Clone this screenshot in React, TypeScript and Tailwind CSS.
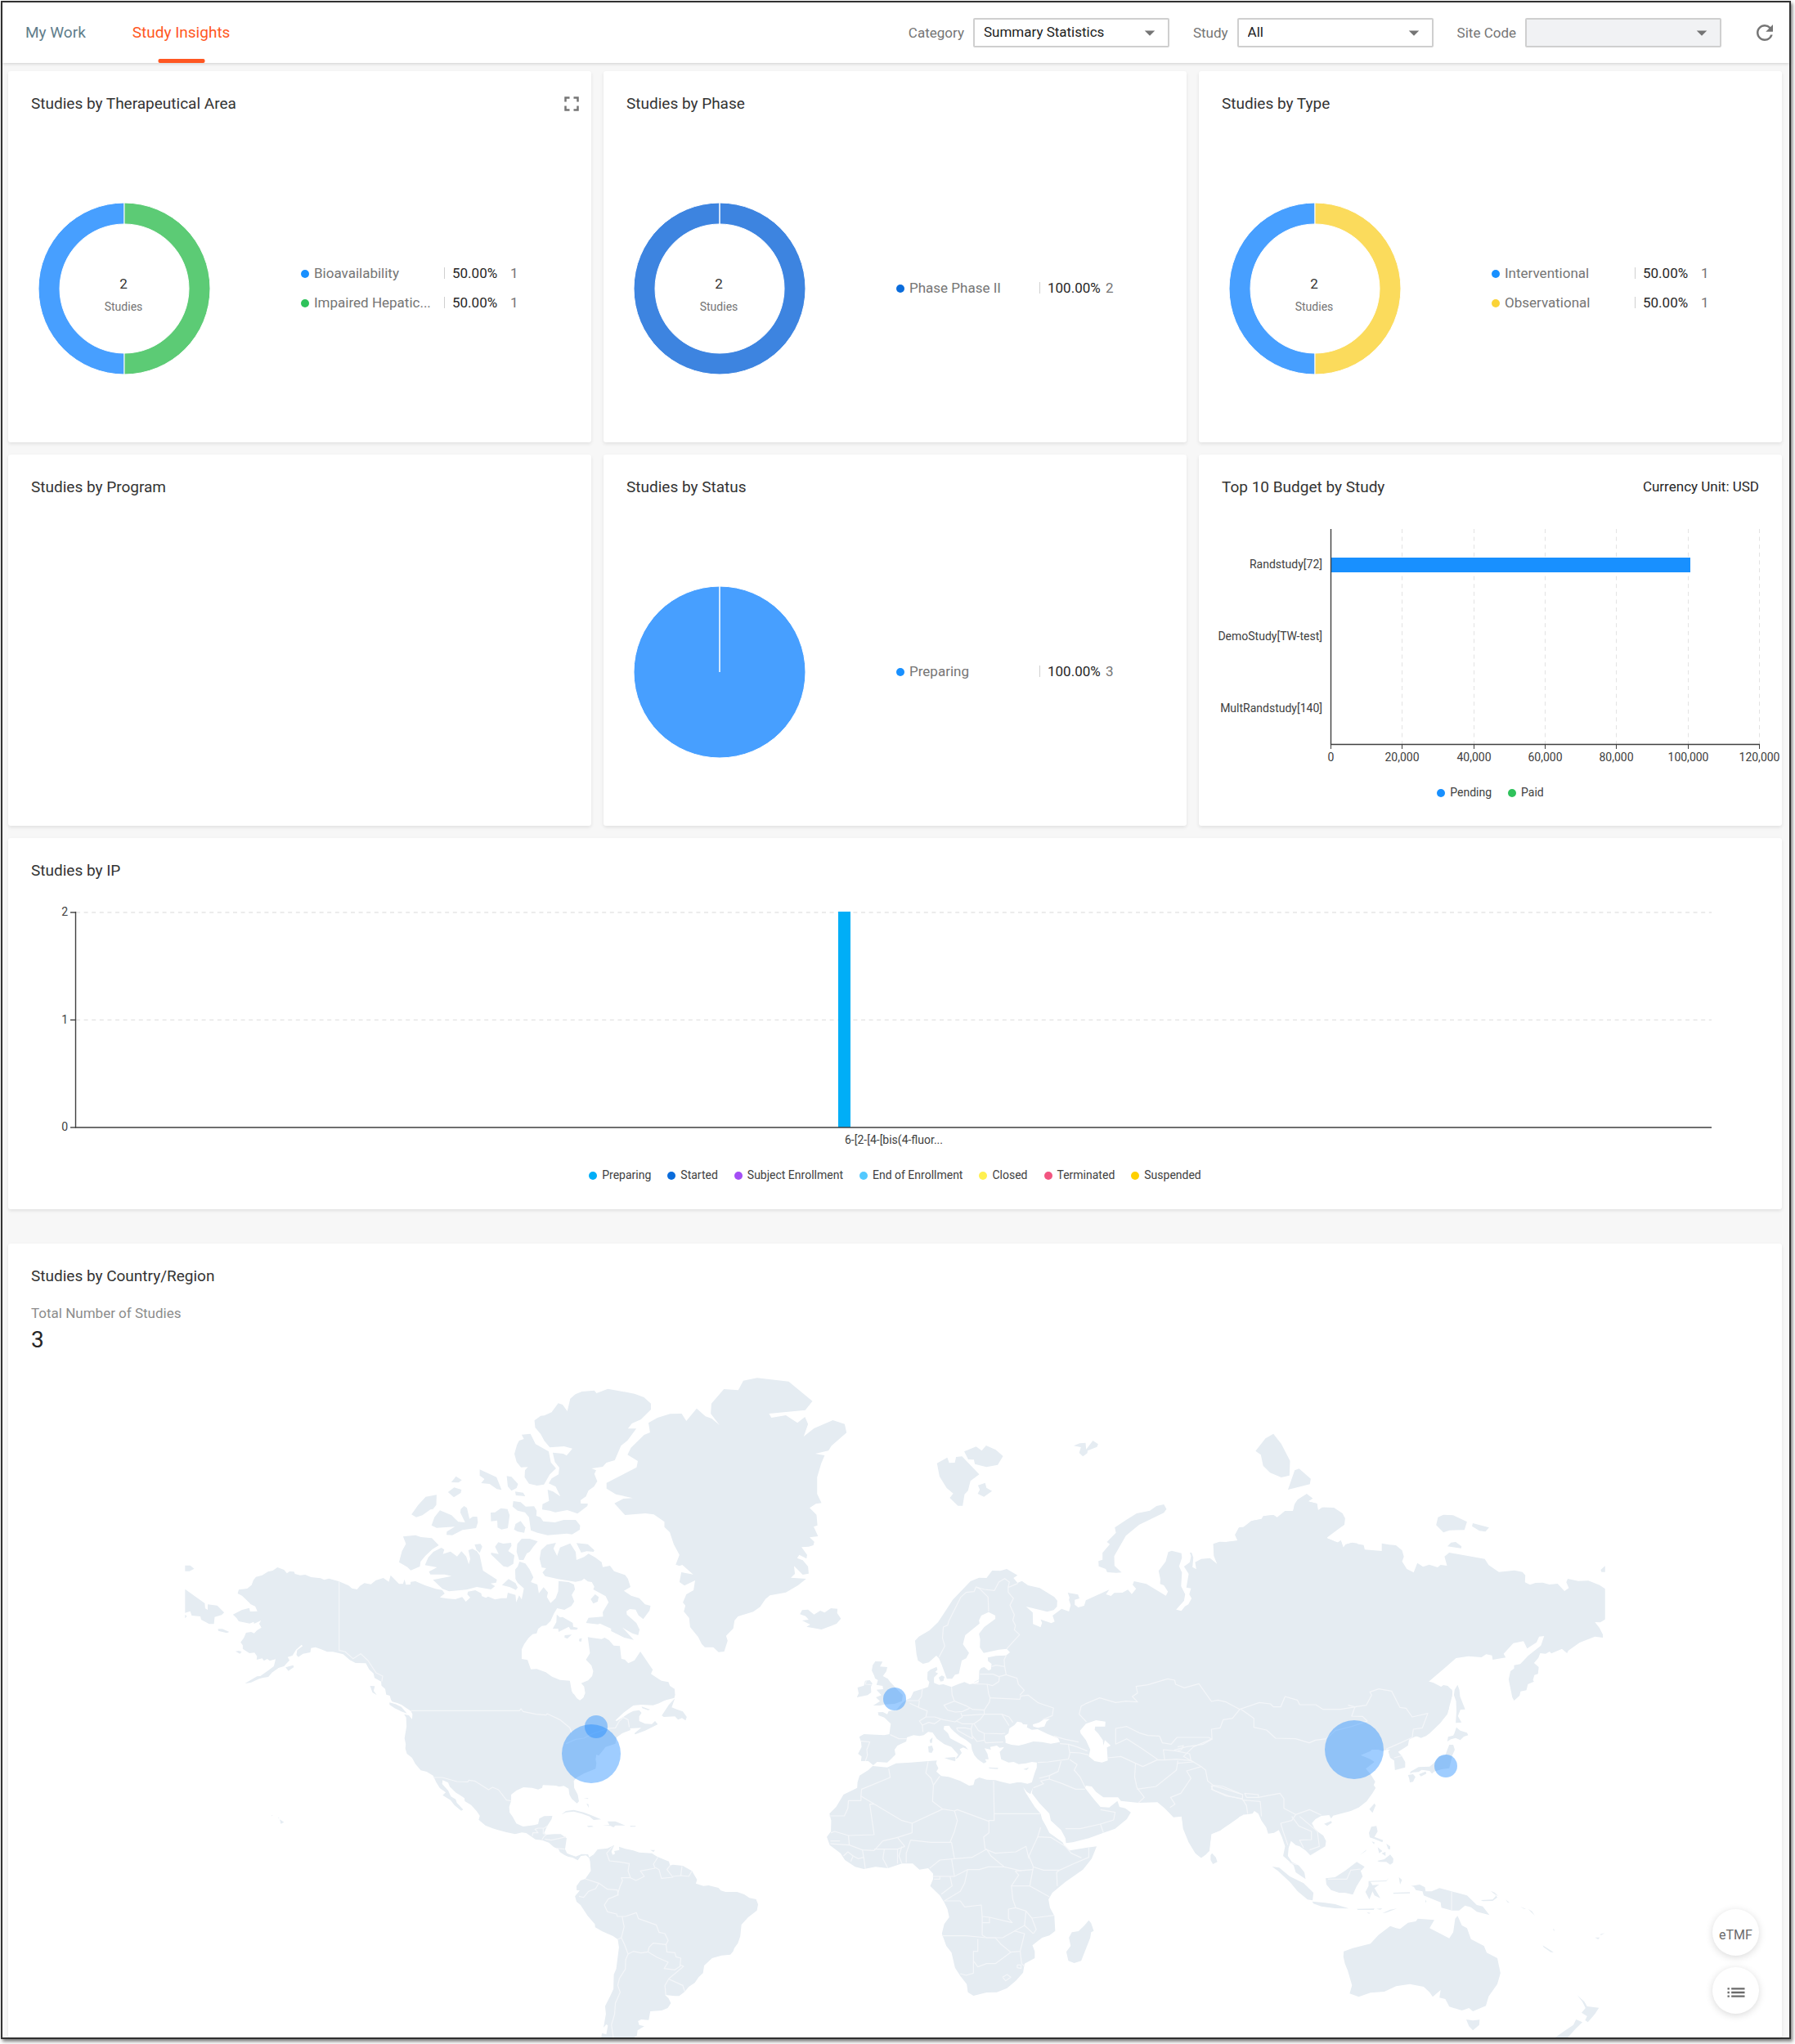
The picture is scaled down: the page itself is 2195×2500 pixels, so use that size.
import React from "react";
import { MdArrowDropDown, MdFullscreen, MdList, MdRefresh } from "react-icons/md";

const FONT = "font-['Roboto','Liberation_Sans',sans-serif]";

/* ------------------------------- header -------------------------------- */

function FilterSelect({ id, label, options, disabled }: { id: string; label: string; options: string[]; disabled?: boolean }) {
  return (
    <div className="flex items-center gap-[11px]">
      <label htmlFor={id} className="text-[17px] leading-6 text-[#757575]">
        {label}
      </label>
      <div className="relative">
        <select
          id={id}
          disabled={disabled}
          className="block h-9 w-[240px] appearance-none rounded-[2px] border-2 border-[#cfcfcf] bg-white pl-[11px] pr-9 text-[17px] text-[#212121] opacity-100 disabled:bg-[#f1f2f4]"
        >
          {options.map((o) => (
            <option key={o}>{o}</option>
          ))}
        </select>
        <MdArrowDropDown className="pointer-events-none absolute right-[9px] top-[3px] text-[#757575]" size={30} />
      </div>
    </div>
  );
}

function Header() {
  return (
    <header className="relative flex h-[74px] items-center justify-between bg-white pl-7 pr-[15px] shadow-[0_1px_4px_rgba(0,0,0,0.16)]">
      <nav className="flex h-full gap-[57px]">
        <button type="button" className="text-[19px] text-[#607d8b]">
          My Work
        </button>
        <button type="button" className="relative text-[19px] text-[#ff5722]">
          Study Insights
          <span className="absolute bottom-0 left-1/2 h-[5px] w-[57px] -translate-x-1/2 rounded-[2px] bg-[#ff5722]" />
        </button>
      </nav>
      <div className="flex items-center gap-[29px]">
        <FilterSelect id="category" label="Category" options={["Summary Statistics"]} />
        <FilterSelect id="study" label="Study" options={["All"]} />
        <FilterSelect id="site" label="Site Code" options={[""]} disabled />
        <button type="button" aria-label="Refresh" className="ml-[9px] text-[#757575]">
          <MdRefresh size={30} />
        </button>
      </div>
    </header>
  );
}

/* -------------------------------- cards -------------------------------- */

function Card({ title, extra, className = "", children }: { title: string; extra?: React.ReactNode; className?: string; children?: React.ReactNode }) {
  return (
    <section className={"min-h-[454px] min-w-0 rounded-[3px] bg-white pt-[26px] shadow-[0_2px_4px_rgba(0,0,0,0.09)] " + className}>
      <div className="flex h-7 items-center justify-between pl-7">
        <h2 className="text-[19px] leading-7 text-[#333]">{title}</h2>
        {extra}
      </div>
      {children}
    </section>
  );
}

type Slice = { name: string; pct: string; count: number; fill: string; dot: string };

function arc(from: number, to: number, r: number, hole: number) {
  const c = 105;
  const p = (a: number, k: number) => `${c + k * Math.sin(a * 2 * Math.PI)} ${c - k * Math.cos(a * 2 * Math.PI)}`;
  const mid = (from + to) / 2;
  return `M${p(from, r)}A${r} ${r} 0 0 1 ${p(mid, r)}A${r} ${r} 0 0 1 ${p(to, r)}L${p(to, hole)}A${hole} ${hole} 0 0 0 ${p(mid, hole)}A${hole} ${hole} 0 0 0 ${p(from, hole)}Z`;
}

function PieCard({ title, slices, total, extra }: { title: string; slices: Slice[]; total?: number; extra?: React.ReactNode }) {
  const hole = total === undefined ? 0 : 79;
  const n = slices.length;
  return (
    <Card title={title} extra={extra}>
      <div className="flex items-center gap-[111px] pl-[37px] pt-[107px]">
        <div className="relative shrink-0">
          <svg width="210" height="210" viewBox="0 0 210 210" className="overflow-visible">
            {slices.map((s, i) => (
              <path key={s.name} d={arc((n - 1 - i) / n, (n - i) / n, 105, hole)} fill={s.fill} stroke="#fff" strokeWidth="1" />
            ))}
          </svg>
          {total !== undefined && (
            <div className="absolute inset-0 flex flex-col items-center justify-center pl-px pr-[3px] pt-4">
              <span className="text-[17px] leading-7 text-[#333]">{total}</span>
              <span className="text-[14px] leading-7 text-[#757575]">Studies</span>
            </div>
          )}
        </div>
        <ul className="flex flex-col pb-[2px] text-[17px] leading-9 text-[#757575]">
          {slices.map((s) => (
            <li key={s.name} className="flex items-center">
              <span className={"mr-[6px] mt-[2px] h-[10px] w-[10px] rounded-full " + s.dot} />
              <span className="w-[159px]">{s.name}</span>
              <span className="mr-[9px] h-[14px] w-px bg-[#d0d0d0]" />
              <span className="w-[71px] text-[#262626]">{s.pct}</span>
              <span>{s.count}</span>
            </li>
          ))}
        </ul>
      </div>
    </Card>
  );
}

function Legend({ items }: { items: [string, string][] }) {
  return (
    <ul className="flex justify-center gap-5 text-[14px] leading-5 text-[#404040]">
      {items.map(([name, dot]) => (
        <li key={name} className="flex items-center gap-[6px]">
          <span className={"mt-[2px] h-[10px] w-[10px] rounded-full " + dot} />
          {name}
        </li>
      ))}
    </ul>
  );
}

function BudgetCard() {
  const ticks = ["0", "20,000", "40,000", "60,000", "80,000", "100,000", "120,000"];
  const rows = ["Randstudy[72]", "DemoStudy[TW-test]", "MultRandstudy[140]"];
  return (
    <Card title="Top 10 Budget by Study" extra={<span className="pr-7 text-[17px] text-[#262626]">Currency Unit: USD</span>}>
      <svg viewBox="0 0 713 300" className="mt-[30px] block w-full text-[14px]" fill="#404040">
        {ticks.map((t, i) => {
          const x = Math.round(161 + i * 87.3) + 0.5;
          return (
            <g key={t}>
              {i > 0 && <path d={`M${x} 7V270`} stroke="#e3e3e3" strokeDasharray="5 4.6" />}
              <path d={`M${x} 270v6`} stroke="#404040" />
              <text x={x} y="291" textAnchor="middle">
                {t}
              </text>
            </g>
          );
        })}
        {rows.map((r, i) => (
          <text key={r} x="151" y={55 + i * 88} textAnchor="end">
            {r}
          </text>
        ))}
        <rect x="162" y="42" width="439" height="18" fill="#1890ff" />
        <path d="M161.5 7V270.5H686" fill="none" stroke="#404040" strokeWidth="1.4" />
      </svg>
      <div className="pt-[19px]">
        <Legend items={[["Pending", "bg-[#1890ff]"], ["Paid", "bg-[#2fc25b]"]]} />
      </div>
    </Card>
  );
}

function IpCard() {
  return (
    <Card title="Studies by IP">
      <svg viewBox="0 0 2169 310" className="mt-[21px] block w-full text-[14px]" fill="#404040">
        {[2, 1, 0].map((v, i) => {
          const y = [16, 147.5, 279][i];
          return (
            <g key={v}>
              {v > 0 && <path d={`M83 ${y}H2083`} stroke="#e6e6e6" strokeWidth="1.4" strokeDasharray="5 4.6" />}
              <path d={`M76 ${y}h7`} stroke="#404040" strokeWidth="1.4" />
              <text x="73" y={y + 4} textAnchor="end">
                {v}
              </text>
            </g>
          );
        })}
        <rect x="1015" y="15" width="15" height="264" fill="#00aef7" />
        <path d="M82.5 15V279H2083" fill="none" stroke="#404040" strokeWidth="1.4" />
        <text x="1083" y="299" textAnchor="middle">
          6-[2-[4-[bis(4-fluor...
        </text>
      </svg>
      <div className="pt-[17px]">
        <Legend
          items={[
            ["Preparing", "bg-[#00aef7]"],
            ["Started", "bg-[#0a6cdb]"],
            ["Subject Enrollment", "bg-[#a44ef5]"],
            ["End of Enrollment", "bg-[#53c9ff]"],
            ["Closed", "bg-[#fff04f]"],
            ["Terminated", "bg-[#f25580]"],
            ["Suspended", "bg-[#ffd000]"],
          ]}
        />
      </div>
    </Card>
  );
}

/* --------------------------------- map --------------------------------- */

type Tile = { transform: string; land: string[]; water?: string[]; borders: string[] };

/* Each tile keeps its outlines in a local grid that the transform places on the map. */
const TILES: Tile[] = [
  {
    // Alaska, Canada and the Arctic islands
    transform: "translate(200 1660) scale(0.44643 0.33333)",
    land: [
      "481,823 453,812 440,817 430,811 404,807 388,798 374,800 360,795 357,787 345,786 338,793 330,780 312,771 299,783 286,787 270,800 253,806 246,818 241,836 229,849 206,853 203,867 215,875 229,893 239,907 251,914 257,932 237,933 235,920 215,927 190,944 200,957 206,969 236,977 247,971 248,978 267,966 262,978 268,992 256,1002 248,1013 240,1008 226,1011 220,1030 211,1046 217,1057 217,1070 235,1086 249,1084 256,1097 255,1110 270,1105 275,1114 284,1107 291,1114 307,1108 302,1134 288,1148 265,1170 256,1171 223,1197 239,1194 262,1180 273,1176 287,1173 297,1157 315,1140 330,1134 336,1125 345,1112 340,1100 353,1095 363,1073 378,1055 381,1060 366,1075 364,1092 369,1100 382,1088 402,1083 404,1067 416,1064 432,1072 448,1081 464,1081 492,1090 510,1111 526,1122 554,1123 563,1145 575,1160 578,1177 596,1190 597,1205 607,1217 610,1238 622,1243 626,1260 1140,1260 1127,1248 1118,1225 1113,1187 1086,1184 1064,1172 1047,1156 1022,1144 1006,1145 997,1111 981,1107 981,1072 988,1052 1000,1030 1011,1016 1022,1013 1026,997 1036,986 1048,984 1060,968 1069,941 1078,921 1098,927 1117,913 1125,896 1118,872 1127,852 1124,834 1110,825 1082,821 1081,859 1074,884 1060,902 1050,880 1053,863 1041,844 1028,866 1024,834 1006,825 1013,808 1002,777 991,757 975,750 970,768 963,779 964,814 970,828 987,848 981,889 974,874 966,899 964,872 943,864 940,884 926,884 908,889 889,878 883,883 872,877 870,866 854,855 834,860 832,870 840,882 828,897 818,880 799,888 778,886 757,881 770,867 763,854 745,850 716,837 690,822 677,824 676,834 664,835 660,815 656,832 645,832 622,800 617,824 602,810 581,819 568,833 550,829 538,839 530,852 516,848 507,838",
      "1140,1260 1150,1250 1155,1233 1152,1208 1144,1196 1163,1186 1174,1170 1177,1152 1172,1131 1157,1110 1168,1086 1162,1027 1175,1030 1200,1034 1208,1029 1220,1038 1233,1058 1250,1060 1254,1106 1264,1110 1273,1123 1290,1112 1306,1080 1340,1147 1335,1162 1355,1180 1364,1187 1383,1192 1387,1206 1400,1217 1401,1240 1399,1250 1370,1260",
      "1058,331 1043,307 1033,282 1018,258 1016,232 1033,215 1043,214 1063,202 1081,169 1093,174 1106,198 1114,152 1128,136 1146,126 1180,122 1186,132 1217,116 1290,134 1316,147 1335,170 1335,192 1308,228 1283,243 1272,262 1295,262 1271,305 1253,325 1236,378 1213,387 1203,402 1172,408 1185,415 1180,428 1188,455 1179,475 1164,489 1157,511 1142,525 1143,537 1162,537 1161,546 1134,574 1106,561 1073,569 1058,563 1037,559 1038,539 1056,527 1052,486 1067,493 1087,511 1074,475 1055,463 1063,445 1082,430 1084,405 1072,385 1066,350 1095,354 1104,361 1120,335 1097,327",
      "981,284 1005,281 1019,319 1055,346 1061,386 1075,408 1058,430 1042,467 1023,471 1001,464 989,440 990,415 998,403 979,404 967,384 961,355 968,322 974,306 987,300",
      "866,412 912,440 926,487 913,484 893,465 870,462 879,447 866,434",
      "940,436 953,439 971,465 967,480 953,490 943,474",
      "963,493 985,497 991,510 965,507",
      "801,437 817,451 808,460 788,459",
      "796,478 816,486 814,498 795,514 779,495",
      "748,505 718,512 697,543 679,577 692,587 709,580 731,559 738,557 747,542",
      "757,562 789,580 807,604 826,606 813,570 814,557 823,546 831,553 838,593 847,585 859,585 861,606 856,627 819,634 791,653 775,652 776,640 798,622 748,626 734,617 742,587",
      "924,554 942,557 948,580 943,627 926,632 915,625 914,599 897,602 896,570 908,569",
      "958,528 978,532 992,548 1015,547 1022,563 1021,582 1032,587 1040,602 1072,606 1096,597 1129,597 1141,617 1140,633 1119,650 1105,647 1052,653 1024,644 1006,635 1001,587 990,569 970,563 956,548",
      "978,601 991,625 988,644 970,640 960,632 964,612",
      "656,658 690,653 705,660 735,664 754,690 736,705 717,729 704,750 702,768 677,782 668,770 645,752 653,712 664,685",
      "761,699 769,706 765,722 786,713 804,731 816,712 829,731 836,760 840,740 835,708 846,703 858,712 866,727 875,783 913,816 911,827 896,830 908,840 897,852 858,843 830,853 782,859 764,850 738,817 789,803 770,797 731,797 727,787 749,771 716,763 725,735 739,714",
      "852,687 868,685 873,695 866,718 857,706",
      "917,679 930,684 952,681 953,692 944,711 961,727 958,758 943,770 931,767 897,724 897,717 918,722 908,695",
      "981,666 1003,666 1025,676 1012,697 1003,714 995,720 986,744 974,744 967,714 969,685",
      "945,814 964,829 970,845 965,854 949,844 927,836",
      "1050,688 1075,681 1068,702 1078,729 1086,698 1114,683 1129,715 1131,744 1152,733 1164,721 1182,734 1200,752 1203,770 1223,765 1234,785 1264,799 1272,813 1279,843 1261,857 1281,875 1303,884 1319,907 1334,912 1331,930 1314,961 1301,947 1293,926 1277,924 1268,932 1269,944 1295,975 1304,1000 1300,1020 1284,1013 1257,992 1288,1037 1262,1029 1226,1005 1226,996 1195,977 1190,980 1157,975 1164,956 1204,952 1203,935 1219,899 1211,877 1177,852 1180,842 1173,825 1162,823 1152,812 1145,820 1128,824 1080,814 1045,803 1038,790 1048,774 1036,772 1030,740 1034,708",
      "1131,682 1162,686 1180,708 1178,714 1159,712 1144,717",
      "1182,870 1192,880 1189,897 1177,904 1170,888",
      "1077,944 1086,955 1093,953 1121,975 1122,989 1135,993 1132,1000 1115,1000 1110,989 1082,1008 1081,996 1066,996 1076,972",
      "1099,1020 1118,1018 1106,1033 1098,1028",
      "1139,1033 1146,1031 1144,1044 1138,1042",
      "59,851 113,903 114,922 121,927 121,907 147,911 166,937 159,946 140,953 138,979 125,979 103,963 101,951 77,948 73,932 59,938",
      "59,945 64,950 59,958",
      "59,764 73,764 84,776 71,785 59,785",
      "149,997 161,997 180,1008 173,1012 150,1004",
      "197,1079 206,1077 214,1081 209,1088",
      "334,1138 355,1130 357,1137 342,1151",
    ],
    borders: ["481,823 481,1076 497,1080 519,1106 540,1088 560,1113 582,1158 600,1170 598,1190"],
  },
  {
    // United States, Central and South America
    transform: "translate(200 2040) scale(0.48469 0.33333)",
    land: [
      "560,95 570,98 574,118 577,124 590,129 601,136 612,147 624,158 628,170 627,188 622,180 619,174 607,170 612,182 613,215 608,258 611,280 610,296 614,315 627,330 635,352 649,376 664,381 680,395 688,420 697,441 712,457 704,467 724,485 734,504 751,524 756,520 740,495 737,482 725,472 718,450 703,426 704,412 718,421 722,436 738,458 746,465 759,478 760,489 776,503 790,526 798,543 795,557 812,578 829,588 842,594 865,603 887,610 904,604 915,606 930,621 938,629 955,632 972,641 985,658 996,664 1000,676 1012,687 1020,692 1032,696 1045,706 1053,690 1066,688 1074,698 1076,710 1078,745 1064,774 1052,780 1042,800 1042,815 1050,817 1038,838 1042,858 1052,870 1070,910 1088,940 1089,952 1107,967 1134,984 1146,996 1149,1025 1142,1105 1136,1125 1135,1178 1127,1204 1114,1241 1116,1270 1110,1320 1117,1308 1121,1312 1117,1345 1106,1340 1104,1358 1185,1358 1194,1350 1196,1330 1213,1315 1200,1310 1197,1296 1205,1290 1224,1292 1228,1260 1257,1257 1272,1248 1280,1230 1274,1212 1265,1200 1290,1204 1301,1204 1315,1188 1325,1170 1340,1156 1350,1135 1361,1120 1364,1092 1384,1065 1408,1055 1430,1052 1437,1040 1440,1028 1449,1010 1455,985 1458,942 1475,915 1497,890 1500,868 1495,849 1478,844 1465,831 1447,822 1418,822 1406,817 1400,807 1375,798 1362,800 1343,791 1346,777 1333,745 1310,726 1285,722 1278,725 1275,710 1262,703 1245,692 1232,680 1200,677 1185,670 1165,664 1149,656 1150,668 1137,672 1139,682 1133,686 1130,674 1137,650 1120,662 1095,666 1085,685 1074,695 1071,684 1055,683 1040,692 1028,686 1018,680 1013,665 1017,625 1002,610 985,610 966,612 960,606 968,580 979,555 981,543 960,544 948,553 945,573 935,577 907,582 890,571 881,547 873,530 872,510 877,488 877,465 890,450 908,438 930,440 945,446 955,440 957,430 990,432 998,436 1010,433 1022,443 1024,465 1030,481 1043,497 1048,490 1045,465 1036,440 1035,415 1042,403 1060,388 1090,370 1092,350 1090,335 1092,318 1098,322 1110,300 1115,290 1140,278 1143,255 1157,240 1178,228 1177,222 1205,220 1188,240 1190,244 1215,230 1247,207 1240,195 1232,206 1215,205 1200,195 1200,178 1206,165 1200,155 1185,158 1172,168 1160,180 1143,195 1140,193 1160,165 1185,138 1205,135 1235,137 1250,130 1275,112 1290,100 1290,95 1063,95 1060,108 1051,120 1043,112 1035,95",
      "1290,112 1275,135 1257,175 1262,180 1290,178 1298,190 1308,184 1317,193 1320,180 1310,160 1295,152 1282,145",
      "1206,142 1228,153 1222,155 1208,148",
      "570,127 585,133 600,143 608,157 614,167 600,160 583,148 570,135",
      "521,66 533,67 530,84 538,100 527,90",
      "1004,538 1015,525 1035,521 1060,530 1078,540 1104,556 1085,558 1075,545 1055,535 1035,527 1015,530",
      "1068,580 1080,579 1085,583 1072,584",
      "1107,578 1125,577 1120,563 1140,563 1165,578 1140,578 1135,585 1128,580",
      "1177,579 1192,580 1190,583 1178,583",
      "1060,478 1072,478 1070,481",
      "1067,498 1072,500 1073,514",
      "1228,668 1240,668 1236,675",
      "293,556 304,566 296,572",
      "289,548 292,550 290,552",
      "272,541 275,541 274,544",
    ],
    borders: [
      "624,157 898,157 902,150 907,160 940,170 965,173 968,168 1000,190 1025,220 1030,240",
      "1015,278 1040,262 1060,258 1085,240 1122,222 1140,220 1150,195 1160,182 1172,190 1175,218",
      "680,402 704,402 740,417 768,418 770,412 785,415 820,447 830,438 845,447 865,485 877,488",
      "930,617 932,605 945,605 937,592 945,588 960,588 968,580",
      "958,588 958,608 966,612",
      "955,630 960,618 966,612",
      "962,628 978,632 1000,625 1015,620",
      "990,662 1012,665",
      "1133,655 1118,680 1125,708 1150,712 1175,718 1172,745 1178,770 1155,770 1158,780 1152,800 1145,833",
      "1178,770 1192,780 1213,765 1203,745 1240,735 1236,720 1247,695",
      "1240,732 1250,740 1256,772 1285,768 1270,740 1278,725",
      "1285,765 1305,762 1325,765 1333,745",
      "1305,762 1308,727",
      "1064,774 1098,790 1090,810 1072,820 1060,842 1048,838",
      "1098,790 1120,812 1145,815 1147,833 1122,848 1112,870 1120,895 1143,903 1145,912 1165,912 1193,898 1198,920 1243,943 1250,970 1265,975 1273,1000 1268,1015 1235,1010 1225,1025 1222,1042 1205,1046 1185,1040 1172,1050 1163,1015 1155,990 1162,950 1157,912",
      "1146,996 1155,990",
      "1172,1050 1166,1070 1165,1105 1150,1140 1146,1165 1152,1190 1140,1230 1138,1270 1130,1310 1135,1358",
      "1222,1042 1245,1062 1273,1080 1263,1103 1290,1108 1303,1095 1305,1065 1293,1060 1290,1045 1270,1042 1268,1015",
      "1303,1090 1312,1095 1275,1140 1265,1165 1267,1200",
      "1275,1142 1310,1165 1315,1188",
    ],
  },
  {
    // Greenland, Iceland, Svalbard
    transform: "translate(700 1660) scale(0.38265 0.33333)",
    land: [
      "470,249 445,225 425,217 397,188 364,234 349,207 312,208 272,222 243,241 248,276 229,285 187,332 176,358 209,381 205,404 109,461 109,482 139,503 193,517 163,519 134,536 168,579 233,573 260,577 294,604 294,623 311,642 324,687 342,725 330,761 342,766 351,762 386,797 348,789 342,825 358,838 392,819 387,855 364,870 353,900 361,911 356,933 373,957 376,990 402,1027 413,1052 423,1064 450,1064 467,1082 485,1080 496,1040 491,1022 514,995 518,966 529,951 578,934 600,916 617,887 631,874 682,863 721,837 747,813 698,809 711,795 708,766 736,798 755,794 753,768 736,745 718,737 725,725 748,739 750,725 732,697 755,695 770,690 773,677 758,661 785,657 771,622 783,617 780,578 758,553 778,538 796,535 782,502 782,440 795,390 806,360 776,354 818,343 828,325 876,277 870,245 832,231 772,261 739,291 753,245 743,219 719,241 682,213 636,222 628,207 744,194 767,161 691,89 590,76 546,86 530,121 484,117 444,170 442,207",
      "727,943 734,928 753,926 772,944 792,930 806,937 826,921 847,923 846,939 858,959 844,978 796,999 748,989 760,981 734,966 755,963 745,950",
      "1165,389 1198,368 1204,388 1222,387 1226,366 1245,364 1300,430 1272,454 1264,490 1253,503 1247,545 1232,545 1206,516 1217,500 1196,480 1173,437",
      "1252,346 1290,328 1308,343 1322,324 1353,340 1376,363 1359,395 1323,403 1286,392 1283,376 1265,375",
      "1296,470 1319,461 1323,479 1341,491 1315,512 1295,501 1302,486",
    ],
    borders: [],
  },
  {
    // Scandinavia and western Russia
    transform: "translate(1100 1720) scale(0.35714 0.33333)",
    land: [
      "178,1030 200,1020 222,1012 240,1020 270,1015 272,1005 253,1015 258,1010 272,1003 273,970 280,960 290,957 305,970 313,965 315,945 303,935 302,922 330,916 365,914 378,903 367,890 340,893 288,905 275,885 276,855 272,835 290,810 328,780 328,768 305,755 280,768 272,785 274,797 225,840 217,873 238,905 228,925 213,933 203,982 190,985 180,1000 162,1000 145,950 135,925 126,915 100,940 80,945 63,933 58,910 53,860 66,845 103,822 132,792 158,750 182,710 243,642 272,629 298,630 317,603 345,604 367,597 404,620 390,630 404,648 419,641 440,657 480,667 530,700 540,713 539,735 528,748 505,754 480,747 433,735 456,757 457,799 483,811 488,795 483,782 520,796 531,790 524,768 555,743 580,753 586,730 580,710 582,702 576,684 611,691 616,705 600,710 600,728 612,738 632,732 638,712 718,673 707,690 724,696 735,685 763,684 782,673 795,689 810,670 798,655 803,642 845,652 912,695 919,680 905,657 892,652 893,635 887,604 911,570 920,535 932,530 965,539 967,556 957,587 967,610 964,660 978,690 974,714 958,733 947,746 965,751 977,734 989,727 1000,705 992,690 998,668 982,665 990,615 974,588 994,572 998,550 994,537 1000,537 1006,555 1003,590 1016,598 1012,572 1033,560 1063,557 1087,578 1076,549 1074,505 1095,497 1125,498 1158,493 1149,472 1161,446 1180,443 1205,421 1240,413 1246,403 1281,399 1293,408 1321,384 1348,384 1352,362 1363,343 1394,322 1415,338 1397,349 1430,357 1433,382 1450,371 1487,372 1517,393 1525,412 1523,434 1462,483 1500,500 1511,492 1519,518 1530,507 1550,500 1568,503 1568,1150 30,1150 22,1078 38,1070 48,1047 78,1037 98,1030 102,1012 95,1003 96,975 106,966 127,956 130,967 122,975 132,980 118,995 118,1015 135,1022 150,1020",
      "134,995 145,988 154,993 150,1008 140,1010",
      "760,610 736,585 735,550 775,475 820,435 905,391 914,377 905,360 880,366 857,383 812,393 775,418 737,445 741,464 710,498 720,506 695,538 695,563 681,568 682,587 706,597 711,609 742,611",
      "596,145 617,136 637,134 639,158 662,126 680,139 676,149 644,163 643,172 628,184 615,171 621,150",
      "1219,164 1253,118 1280,101 1307,138 1337,200 1335,254 1307,261 1269,244 1245,218 1237,178",
      "1330,306 1353,235 1368,229 1408,266 1405,286",
    ],
    borders: [],
  },
  {
    // Eastern Siberia
    transform: "translate(1500 1720) scale(0.44324 0.33333)",
    land: [
      "0,497 30,493 23,472 35,444 46,443 68,421 96,414 101,403 129,399 139,408 161,384 183,384 188,358 196,343 221,322 237,338 225,349 248,357 252,382 263,371 294,372 317,393 326,409 325,434 285,468 276,484 307,500 315,492 322,518 328,507 344,501 378,509 381,526 428,531 428,503 448,508 467,510 484,529 489,552 484,569 497,597 516,610 526,575 542,589 559,581 582,591 590,582 608,585 601,551 614,537 712,560 723,583 751,608 794,602 816,608 824,620 823,646 837,655 852,648 872,647 890,654 913,651 932,678 944,667 937,646 941,633 970,641 998,640 1029,656 1044,670 1044,782 1031,793 1016,792 1028,812 1038,838 1038,849 1016,845 974,867 943,896 939,906 925,890 896,907 891,900 880,908 865,906 860,923 848,942 861,957 859,982 849,986 845,1005 848,1010 831,1020 827,1042 811,1046 808,1062 793,1080 788,1068 778,1002 783,972 793,962 793,950 810,946 832,915 867,878 876,843 862,845 855,866 829,889 819,862 791,869 764,908 770,922 734,930 732,914 716,910 703,921 667,917 633,924 600,962 555,1013 573,1017 580,1030 588,1033 598,1023 610,1026 623,1045 622,1065 615,1080 613,1110 608,1130 590,1162 560,1200 550,1210 536,1217 524,1210 500,1225 495,1240 470,1260 0,1260",
      "637,1022 642,1040 644,1065 658,1112 645,1113 638,1137 648,1160 632,1162 634,1120 633,1082 627,1060 629,1040",
      "583,407 598,398 625,400 663,424 656,454 615,455 598,463 578,436",
      "679,429 724,445 714,460 697,457 677,440",
      "609,514 619,500 632,498 648,514 647,521",
      "1044,586 1032,600 1034,608 1044,608",
    ],
    borders: [],
  },
  {
    // Europe, Africa, Middle East
    transform: "translate(960 2040) scale(0.35714 0.33333)",
    land: [
      "414,118 400,130 380,155 355,158 350,170 335,162 318,163 320,174 340,182 362,205 357,243 340,247 270,243 254,253 260,270 262,290 250,315 262,325 260,342 285,342 302,357 315,345 350,347 362,335 378,318 375,300 385,285 415,270 417,255 440,247 460,250 475,247 490,235 505,237 520,260 545,280 570,290 582,305 593,318 583,335 592,330 605,312 598,298 610,292 627,300 618,288 590,272 565,258 558,240 543,225 545,213 562,212 568,222 580,235 600,252 620,265 637,280 640,300 648,320 660,335 680,350 690,345 685,335 697,335 693,315 683,295 705,300 702,290 725,285 735,293 750,290 745,297 735,308 740,335 765,347 783,345 800,353 825,350 845,345 862,347 862,365 855,385 845,420 830,425 808,420 795,420 770,425 740,418 720,412 690,410 665,402 650,410 645,430 630,432 600,415 560,400 535,397 518,380 525,368 517,350 520,340 490,342 430,347 380,350 350,365 300,360 285,375 255,395 248,420 247,440 200,465 175,510 152,535 158,560 157,600 143,620 153,650 190,680 205,705 240,730 270,738 310,730 352,735 400,718 437,718 460,740 490,735 507,755 507,775 497,800 530,835 545,860 556,885 562,915 545,940 537,975 552,1020 570,1045 582,1100 600,1130 622,1160 626,1190 645,1203 690,1191 725,1190 760,1175 790,1148 815,1118 820,1085 855,1065 855,1040 847,1018 880,990 905,982 925,965 922,910 907,880 902,850 915,825 960,785 1020,740 1050,700 1067,655 1030,660 975,670 958,655 950,640 905,605 893,580 880,555 875,535 855,510 825,460 815,437 828,455 840,463 848,440 845,460 870,495 905,535 910,560 945,595 960,625 962,643 985,640 1040,625 1090,605 1130,590 1170,555 1184,530 1165,515 1145,510 1138,488 1110,512 1080,510 1060,485 1045,465 1027,440 1030,432 1050,435 1065,455 1090,475 1140,475 1150,488 1210,495 1275,493 1300,515 1330,548 1358,545 1365,590 1385,630 1410,685 1425,697 1440,685 1453,672 1455,650 1460,610 1490,597 1530,565 1550,550 1568,540 1568,130 425,130",
      "309,-24 334,-23 325,-5 350,-3 347,12 335,30 352,40 360,52 372,65 385,80 403,100 400,122 375,132 340,134 325,138 302,138 325,122 311,108 330,100 313,80 336,78 334,66 313,62 318,45 308,38 305,28 297,10 300,-10",
      "274,47 290,45 299,57 294,70 295,90 283,100 246,108 252,93 248,72 270,65",
      "545,330 583,327 583,343 560,336",
      "490,288 503,285 508,300 502,312 492,310",
      "495,265 505,255 503,275 497,275",
      "697,365 730,367 728,371 700,369",
      "815,372 835,365 828,374",
      "1462,680 1475,695 1480,712 1465,720 1457,705 1457,687",
      "1040,926 1048,937 1057,965 1048,970 1045,990 1014,1075 990,1083 970,1075 963,1042 978,1020 972,990 982,970 1005,966 1025,945",
    ],
    water: [
      "755,265 752,250 765,240 768,222 785,210 795,197 810,200 815,207 830,208 828,218 845,227 865,225 900,243 935,258 941,272 910,278 880,272 850,270 820,280 800,285 775,282 755,275",
      "848,208 870,200 885,190 907,187 895,197 888,215 865,220 850,215",
      "1010,230 1030,205 1065,192 1097,197 1096,215 1062,215 1060,227 1072,240 1088,265 1090,285 1095,265 1115,285 1102,292 1105,340 1085,347 1060,342 1040,325 1045,300 1030,265 1012,240",
    ],
    borders: [
      "360,245 390,260 417,260",
      "258,268 290,272 280,300 282,320 275,342",
      "920,250 960,262 1005,272",
      "941,278 970,280 1000,290 1035,305",
      "970,280 975,315 970,335 900,345 865,347",
      "975,310 1010,312 1040,320",
      "945,342 935,380 905,395 870,405",
      "975,337 1000,355 990,375 1010,400 1027,437",
      "850,440 885,425 875,415 905,408 950,425 995,445 1027,445",
      "905,408 905,395",
      "1105,330 1150,325 1200,350 1197,400 1205,440 1230,475 1210,495",
      "1200,350 1225,362 1275,337 1300,338",
      "1132,280 1170,260 1220,295 1275,335",
      "1205,445 1270,435 1305,405 1340,375 1345,340",
      "1300,338 1340,335 1390,340 1385,315 1340,305 1295,300 1300,338",
      "1318,512 1335,500 1320,475 1355,460 1390,405 1375,378 1425,362 1440,375 1447,415 1465,430 1500,435 1568,465",
      "1465,430 1460,445 1510,470 1568,480",
      "1425,362 1390,340",
      "714,415 716,535 875,535",
      "716,535 716,560 698,560 698,605 680,620 685,665",
      "580,525 590,520 698,563",
      "490,343 482,385 500,405 508,430 505,490 540,518 435,570 400,560 290,490 260,470 262,445 360,402 355,370",
      "508,430 530,397",
      "540,518 580,525 590,560 580,600 565,640",
      "435,570 435,605 385,622 410,655",
      "260,470 260,487 217,487 215,515 203,543 150,543",
      "305,500 290,500 305,612 217,615 170,600 157,605",
      "217,615 220,650",
      "385,622 335,635 305,670 265,668 220,650 155,645",
      "155,635 188,635",
      "430,632 500,640 570,640 580,700 530,705 495,735",
      "430,632 415,680 415,715",
      "400,655 390,690 400,718",
      "385,665 385,718",
      "340,665 335,700 352,735",
      "305,665 385,665 410,655",
      "265,668 270,700 275,738",
      "200,690 215,675 233,690 225,710",
      "233,690 250,700 270,695",
      "580,700 640,695 690,665 705,690 750,730 810,745",
      "685,665 720,680 790,675 825,655 835,700",
      "570,700 580,765 625,740 665,740 695,730 750,730",
      "875,585 865,620 835,690 850,730 885,742 940,742 985,720 1040,695 1040,660",
      "865,620 910,622 960,655 980,680 1015,697",
      "850,730 838,800 905,840",
      "940,742 930,750 932,800",
      "625,740 615,790 600,820 545,855",
      "788,745 800,760 775,800 780,850 790,880 765,885 765,920 778,935 700,915 675,912 672,870 615,877 600,855 545,855",
      "790,745 850,740",
      "775,800 838,800",
      "505,765 580,765",
      "510,775 530,775 530,765",
      "565,765 572,800 535,830",
      "675,912 675,980 690,990 745,990 820,945 850,975",
      "675,935 700,935 700,915",
      "790,880 825,892 845,918 922,908",
      "825,892 820,945",
      "845,918 860,960 850,975",
      "537,983 620,983 690,990 720,990",
      "660,995 660,1040 645,1040 645,1120 620,1128 600,1122",
      "645,1075 660,1097 690,1085 720,1085 773,1043 740,1015 720,990",
      "773,1043 805,1040 820,975 785,965",
      "805,1040 810,1085 820,1095",
      "745,1135 760,1125 773,1135 755,1148 745,1135",
      "795,1090 808,1090 808,1103 795,1100 795,1090",
      "960,590 1010,590 1080,573 1090,605",
      "1080,573 1125,558 1130,530 1080,520",
      "278,48 275,60 296,62",
    ],
  },
  {
    // Political borders of northern Europe and central Asia
    transform: "translate(1100 1720) scale(0.35714 0.33333)",
    land: [],
    borders: [
      "135,920 155,880 147,850 150,810 165,803 168,790 210,700 228,683 255,680 262,663 275,670 303,700 305,753",
      "262,663 290,672 325,676 340,645 360,632 376,645 372,665 405,650",
      "372,665 372,682 390,705 378,730 393,765 388,785 397,805 393,820 411,838 367,890",
      "365,914 358,930 360,955 330,950 315,955",
      "360,955 365,985 340,992 320,983 275,983",
      "365,985 402,998 407,1020 427,1042 412,1060",
      "342,992 340,1010 318,1025 300,1020 253,1018",
      "300,1020 305,1055 310,1070 412,1075 415,1063 440,1060 475,1088 527,1107 523,1135 490,1150",
      "178,1030 180,1060 188,1082 230,1100 250,1112 290,1115 308,1085 310,1070",
      "188,1082 152,1097 165,1115 190,1122 215,1120 240,1108",
      "65,1105 95,1118 90,1140 68,1155 78,1170 80,1195",
      "90,1140 120,1140 150,1150 190,1158 215,1140 210,1125",
      "78,1170 100,1160 120,1165 140,1150",
      "215,1135 290,1130 290,1115",
      "290,1130 275,1150 255,1165 215,1165 195,1155",
      "290,1130 350,1130 365,1155 375,1172",
      "350,1130 375,1140 388,1160",
      "255,1165 270,1190 290,1200 350,1202 362,1200",
      "195,1180 225,1180 245,1185 250,1220 200,1190 195,1180",
      "250,1165 245,1185",
      "250,1210 265,1230 290,1225 295,1235 355,1232",
      "290,1200 290,1225",
      "22,1080 65,1080 75,1065 78,1037",
      "35,1090 65,1105 68,1080",
      "640,1158 615,1130 622,1100 640,1090 685,1070 740,1087 775,1082 815,1085 797,1065 815,1052 810,1028 850,1022 918,1000 942,1005 945,1020 975,1033 1025,1018 1068,1083 1090,1078 1118,1085 1165,1112 1140,1145 1108,1150 1098,1180 1068,1185 1070,1222 1058,1215 950,1215 930,1240 900,1235 890,1210 850,1208 820,1198 778,1175 740,1182 740,1240",
      "1165,1112 1232,1087 1270,1092 1280,1103 1305,1103 1320,1065 1362,1078 1370,1095 1425,1095 1450,1112 1510,1112 1565,1102",
      "1070,1222 1040,1240 980,1250 940,1262",
    ],
  },
  {
    // China, south-east Asia, Oceania
    transform: "translate(1440 2040) scale(0.48151 0.33333)",
    land: [
      "0,545 10,543 14,590 28,640 45,680 60,697 72,685 80,670 83,640 85,610 105,598 130,575 155,550 158,540 190,535 195,525 205,535 213,560 225,585 230,608 245,605 257,595 265,620 273,655 268,690 280,705 295,725 300,750 325,775 322,750 308,725 290,712 280,690 282,660 288,635 300,650 310,655 325,670 337,688 375,655 377,635 370,615 350,595 341,570 350,555 365,543 385,540 390,553 395,542 440,525 460,512 480,490 495,460 503,440 498,430 502,418 490,390 478,370 500,345 490,335 465,320 490,305 500,288 510,300 520,305 545,295 535,305 540,330 550,340 552,375 578,365 578,345 568,320 560,308 585,285 588,262 602,250 620,255 650,225 685,170 696,110 697,80 685,68 670,70 650,55 640,50 0,50",
      "708,218 718,230 735,238 738,247 727,252 718,265 706,257 694,262 685,270 687,253 700,248 703,240",
      "690,282 700,282 704,300 698,320 693,350 690,368 670,372 652,380 646,388 640,378 620,374 612,382 598,383 590,388 592,380 612,364 640,362 652,348 665,325 680,320 685,300",
      "585,393 598,390 604,400 598,418 590,420 588,405",
      "613,390 630,380 632,388 618,398",
      "240,729 258,733 285,765 320,790 345,825 343,853 330,850 305,820 285,785 255,745",
      "342,857 375,862 400,867 435,883 400,882 365,875 345,865",
      "455,884 500,883 498,888 458,888",
      "505,884 520,882 515,887",
      "520,900 540,887 557,883 530,898",
      "480,896 490,899 486,902",
      "376,772 400,768 425,745 455,712 475,730 465,745 470,765 455,800 445,832 425,825 410,825 390,815 378,795",
      "485,782 530,780 537,770 530,783 490,785 495,797 512,795 500,808 515,845 500,835 495,820 487,850 477,822 485,800",
      "562,768 570,778 565,795",
      "547,825 590,823 590,827 549,829",
      "593,800 615,795 628,805 630,820 645,820 665,808 696,820 735,835 760,870 775,875 792,907 760,895 745,878 730,872 715,890 697,890 670,880 668,860 650,850 625,835 622,820 605,815 600,803",
      "770,852 800,850 808,838 806,830 812,842 800,855 775,856",
      "795,818 805,824 815,838 803,828",
      "833,850 843,862 838,860",
      "870,875 885,885 880,884",
      "890,884 900,893 907,908 898,896",
      "953,957 957,960 956,966",
      "1060,989 1072,989 1068,996",
      "1072,978 1085,973 1076,980",
      "927,1018 955,1043 948,1043 930,1025",
      "492,583 505,580 508,600 500,620 522,632 520,640 500,628 488,622 486,605",
      "507,708 525,702 540,685 548,700 547,715 540,722 530,712 512,712",
      "508,658 520,672 512,680",
      "530,645 540,655 540,665 535,665",
      "518,680 528,675 528,690",
      "493,637 500,640 499,647",
      "462,688 480,667 478,672",
      "500,497 503,505 495,532 487,518",
      "372,572 390,562 392,568 380,580",
      "630,850 632,858 629,862",
      "422,1040 445,1028 490,1012 510,980 540,947 555,955 565,958 585,935 605,930 610,920 652,925 640,955 690,992 700,970 705,920 711,910 722,945 735,955 745,995 778,1020 785,1045 812,1065 820,1120 812,1160 790,1205 783,1240 750,1260 740,1248 722,1257 690,1243 680,1215 665,1210 668,1182 648,1207 640,1190 625,1170 590,1160 555,1168 525,1188 490,1192 460,1207 437,1195 443,1165 432,1110 425,1085 421,1060",
      "733,1290 750,1294 767,1291 766,1310 750,1330 740,1315",
      "1015,1201 1033,1225 1040,1242 1070,1247 1060,1270 1042,1300 1035,1293 1040,1278 1026,1265 1036,1248 1028,1225",
      "1012,1290 1028,1300 1010,1325 990,1358 957,1358 985,1330 1005,1310",
    ],
    borders: [
      "85,432 110,440 165,465 165,482 130,470 90,448 85,432",
      "170,460 205,465 205,475 175,475 170,460",
      "205,475 260,460 270,480 270,515 300,538 335,520 365,540",
      "165,485 210,490 213,545",
      "165,482 175,505 178,535",
      "300,538 290,560 262,570 268,600 280,650",
      "290,545 308,580 340,600 340,630 310,632 320,660",
      "310,545 355,600 360,655 335,668",
      "550,330 570,322",
      "382,775 430,775 440,742 465,738",
      "696,820 696,890",
      "285,715 303,722",
      "0,290 15,285 10,300 0,305",
      "85,262 40,290 15,325 40,345 0,350",
    ],
  },
  {
    // Mongolian and Chinese borders
    transform: "translate(1500 1720) scale(0.44324 0.33333)",
    land: [],
    borders: [
      "40,1112 75,1145 75,1178 110,1188 135,1218 190,1220 228,1235 245,1225 275,1220 300,1190 345,1175 388,1155 375,1138 345,1137 354,1103 385,1097 400,1060 395,1048 420,1037 455,1045 478,1105 495,1108 512,1140 555,1127 540,1180 515,1185 512,1215 480,1235 440,1258",
      "335,1097 354,1103",
    ],
  },
];

const MARKERS = [
  { name: "Canada", x: 729, y: 2112, r: 14 },
  { name: "United States", x: 723, y: 2145, r: 36 },
  { name: "United Kingdom", x: 1094, y: 2078, r: 14 },
  { name: "China", x: 1656, y: 2140, r: 36 },
  { name: "Japan", x: 1768, y: 2160, r: 14 },
];

function WorldMap() {
  return (
    <svg viewBox="10 1680 2169 812" className="mt-[25px] block w-full" role="img" aria-label="Studies by country on a world map">
      {TILES.map((t, i) => (
        <g key={i} transform={t.transform}>
          {t.land.map((p) => (
            <polygon key={p} points={p} fill="#e5ecf2" />
          ))}
          {t.water?.map((p) => (
            <polygon key={p} points={p} fill="#fff" />
          ))}
        </g>
      ))}
      {TILES.map((t, i) => (
        <g key={i} transform={t.transform} fill="none" stroke="#f4f6f9" strokeWidth="1.2" strokeLinejoin="round">
          {t.borders.map((p) => (
            <polyline key={p} points={p} vectorEffect="non-scaling-stroke" />
          ))}
        </g>
      ))}
      {MARKERS.map((m) => (
        <circle key={m.name} cx={m.x} cy={m.y} r={m.r} fill="#1a87ff" fillOpacity="0.42" />
      ))}
    </svg>
  );
}

/* --------------------------------- page -------------------------------- */

export default function App() {
  return (
    <div className={"min-h-screen bg-white pb-[5px] pl-px pr-[5px] pt-px " + FONT}>
      <div className="relative border-2 border-[#333] bg-[#f7f7f7] shadow-[2px_3px_4px_rgba(0,0,0,0.5)]">
        <Header />
        <main className="pl-[7px] pr-[9px] pt-[10px]">
          <div className="grid grid-cols-3 gap-[15px]">
            <PieCard
              title="Studies by Therapeutical Area"
              total={2}
              extra={
                <button type="button" aria-label="Full screen" className="mr-[9px] text-[#757575]">
                  <MdFullscreen size={30} />
                </button>
              }
              slices={[
                { name: "Bioavailability", pct: "50.00%", count: 1, fill: "#479fff", dot: "bg-[#1890ff]" },
                { name: "Impaired Hepatic...", pct: "50.00%", count: 1, fill: "#5ccb75", dot: "bg-[#2fc25b]" },
              ]}
            />
            <PieCard
              title="Studies by Phase"
              total={2}
              slices={[{ name: "Phase Phase II", pct: "100.00%", count: 2, fill: "#3d84e0", dot: "bg-[#0a6cdb]" }]}
            />
            <PieCard
              title="Studies by Type"
              total={2}
              slices={[
                { name: "Interventional", pct: "50.00%", count: 1, fill: "#479fff", dot: "bg-[#1890ff]" },
                { name: "Observational", pct: "50.00%", count: 1, fill: "#fbdb5c", dot: "bg-[#fad337]" },
              ]}
            />
            <Card title="Studies by Program" />
            <PieCard
              title="Studies by Status"
              slices={[{ name: "Preparing", pct: "100.00%", count: 3, fill: "#479fff", dot: "bg-[#1890ff]" }]}
            />
            <BudgetCard />
            <div className="col-span-3">
              <IpCard />
            </div>
          </div>
          <Card title="Studies by Country/Region" className="mt-[42px]">
            <p className="mt-[19px] pl-7 text-[17px] leading-6 text-[#8c8c8c]">Total Number of Studies</p>
            <p className="mt-[5px] pl-7 text-[28px] leading-8 text-[#262626]">3</p>
            <WorldMap />
          </Card>
        </main>
        <div className="absolute bottom-[29px] right-[37px] flex flex-col gap-[14px]">
          <button type="button" className="flex h-[57px] w-[57px] items-center justify-center rounded-full bg-white pt-[7px] text-[16px] text-[#6b6b6b] shadow-[0_2px_10px_rgba(0,0,0,0.15)]">
            eTMF
          </button>
          <button type="button" aria-label="Menu" className="flex h-[57px] w-[57px] items-center justify-center rounded-full bg-white pt-[5px] text-[#6b6b6b] shadow-[0_2px_10px_rgba(0,0,0,0.15)]">
            <MdList size={28} />
          </button>
        </div>
      </div>
    </div>
  );
}
